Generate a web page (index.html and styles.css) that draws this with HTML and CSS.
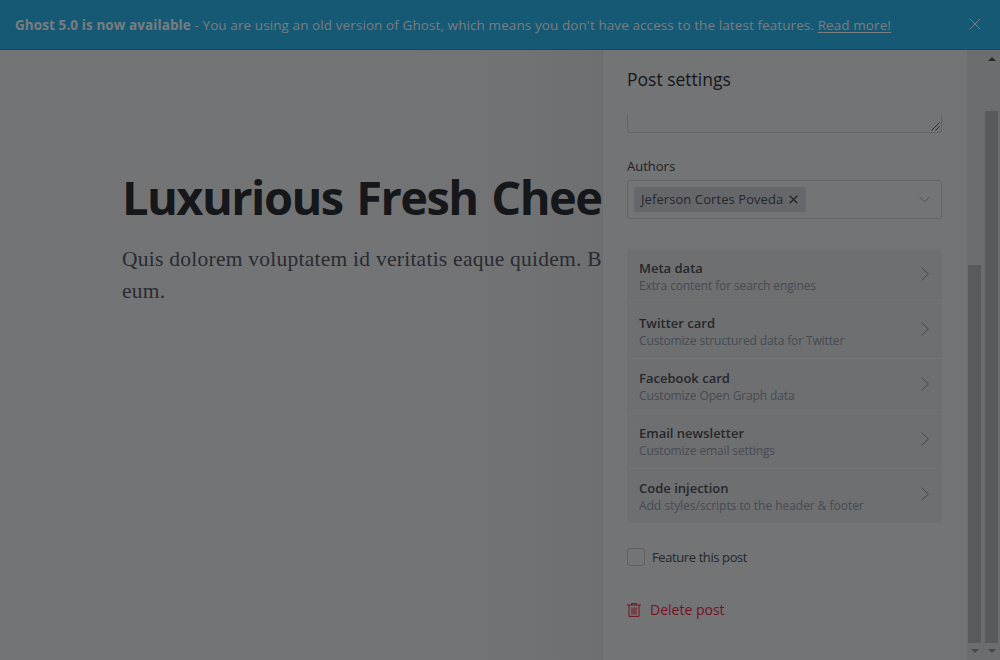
FILE: index.html
```html
<!DOCTYPE html>
<html lang="en">
<head>
<meta charset="utf-8">
<title>Post settings</title>
<link rel="stylesheet" href="styles.css">
</head>
<body>
<div class="app">
  <header class="banner">
    <p class="banner-text"><strong class="banner-strong">Ghost 5.0 is now available</strong> - You are using an old version of Ghost, which means you don't have access to the latest features. <a class="banner-link">Read more!</a></p>
    <svg class="banner-close" viewBox="0 0 12 12"><path d="M0.5 0.5l11 11M11.5 0.5l-11 11"/></svg>
  </header>
  <div class="main">
    <section class="editor">
      <h1 class="title">Luxurious Fresh Chee</h1>
      <p class="body-text">Quis dolorem voluptatem id veritatis eaque quidem. B<br>eum.</p>
    </section>
    <aside class="panel">
      <h2 class="panel-title">Post settings</h2>
      <div class="textarea"><svg class="grip" viewBox="0 0 9 9"><path d="M0.5 8.5l8-8M4.5 8.5l4-4"/></svg></div>
      <div class="label">Authors</div>
      <div class="select">
        <span class="token"><span class="token-name">Jeferson Cortes Poveda</span><svg class="token-x" viewBox="0 0 9 9"><path d="M0.7 0.7l7.6 7.6M8.3 0.7l-7.6 7.6"/></svg></span>
        <svg class="chevron-down" viewBox="0 0 11 7"><path d="M0.5 0.7l5 5 5-5"/></svg>
      </div>
      <ul class="nav">
        <li class="nav-item"><div><b class="nav-title">Meta data</b><span class="nav-sub">Extra content for search engines</span></div><svg class="chevron" viewBox="0 0 8 14"><path d="M0.6 0.6L7.4 7 0.6 13.4"/></svg></li>
        <li class="nav-item"><div><b class="nav-title">Twitter card</b><span class="nav-sub">Customize structured data for Twitter</span></div><svg class="chevron" viewBox="0 0 8 14"><path d="M0.6 0.6L7.4 7 0.6 13.4"/></svg></li>
        <li class="nav-item"><div><b class="nav-title">Facebook card</b><span class="nav-sub">Customize Open Graph data</span></div><svg class="chevron" viewBox="0 0 8 14"><path d="M0.6 0.6L7.4 7 0.6 13.4"/></svg></li>
        <li class="nav-item"><div><b class="nav-title">Email newsletter</b><span class="nav-sub">Customize email settings</span></div><svg class="chevron" viewBox="0 0 8 14"><path d="M0.6 0.6L7.4 7 0.6 13.4"/></svg></li>
        <li class="nav-item"><div><b class="nav-title">Code injection</b><span class="nav-sub nav-sub-wide">Add styles/scripts to the header &amp; footer</span></div><svg class="chevron" viewBox="0 0 8 14"><path d="M0.6 0.6L7.4 7 0.6 13.4"/></svg></li>
      </ul>
      <div class="feature"><span class="checkbox"></span><span class="feature-label">Feature this post</span></div>
      <div class="delete"><svg class="trash" viewBox="0 0 14 14"><path d="M0 2h14M4.5 2V0.6h5V2M2 2v11.4h10V2M5 4.5v7M7 4.5v7M9 4.5v7"/></svg><span class="delete-label">Delete post</span></div>
    </aside>
    <div class="bars">
      <div class="bar inner"><span class="thumb thumb-inner"></span><i class="arrow-down"></i></div>
      <div class="bar outer"><i class="arrow-up"></i><span class="thumb thumb-outer"></span><i class="arrow-down"></i></div>
    </div>
  </div>
</div>
</body>
</html>
```
FILE: styles.css
```css
* { box-sizing: border-box; }
body { margin: 0; background: #737476; font-family: "Open Sans", "Noto Sans", sans-serif; color: #292b2f; }
h1, h2, p, ul { margin: 0; padding: 0; }
svg { fill: none; stroke: currentColor; display: block; flex: none; }
.app { width: 1000px; height: 660px; display: flex; flex-direction: column; overflow: hidden; }
.banner { height: 50px; flex: none; display: flex; align-items: center; justify-content: space-between; padding: 0 19px 0 15px; background: #165974; border-bottom: 1px solid #0e4e6c; color: #7a7d80; }
.banner-text { font-size: 13.5px; letter-spacing: 0.09px; line-height: 20px; white-space: nowrap; padding-top: 1px; font-weight: 500; }
.banner-strong { font-weight: 700; }
.banner-link { text-decoration: underline; text-underline-offset: 2px; }
.banner-close { width: 12px; height: 12px; margin-bottom: 1px; }
.main { flex: 1; display: flex; min-height: 0; }
.editor { width: 602px; flex: none; overflow: hidden; padding: 114px 0 0 122px; background: linear-gradient(90deg, #737476 400px, #717274 520px, #6e6f71 602px); }
.title { font: 700 47px/66px "Open Sans", "Noto Sans", sans-serif; letter-spacing: -1.55px; word-spacing: 3px; color: #15171a; white-space: nowrap; }
.body-text { font: 21.5px/32px "Liberation Serif", serif; letter-spacing: 0.25px; color: #292b31; white-space: nowrap; margin-top: 13px; }
.panel { width: 365px; flex: none; border-left: 1px solid #6a6b6d; padding: 17px 25px 0 24px; display: flex; flex-direction: column; }
.panel-title { font-size: 17.5px; line-height: 24px; font-weight: 500; color: #15171a; white-space: nowrap; }
.textarea { height: 18px; margin-top: 24px; border: 1px solid #646568; border-top: 0; border-radius: 0 0 3px 3px; display: flex; justify-content: flex-end; align-items: flex-end; padding: 0 1px 1px; color: #303134; }
.grip { width: 9px; height: 9px; }
.label { font-size: 13px; line-height: 18px; margin-top: 24px; color: #1d1f22; font-weight: 500; }
.select { height: 39px; margin-top: 5px; border: 1px solid #646568; border-radius: 3px; display: flex; align-items: center; justify-content: space-between; padding: 0 11px 0 6px; color: #505255; }
.token { height: 25px; width: 172px; background: #66676b; border-radius: 3px; display: flex; align-items: center; justify-content: space-between; padding: 0 8px 0 7px; color: #25272a; }
.token-name { font-size: 13px; line-height: 18px; padding-bottom: 2px; letter-spacing: 0.08px; font-weight: 500; white-space: nowrap; }
.token-x { width: 9px; height: 9px; stroke-width: 1.4; }
.chevron-down { width: 11px; height: 7px; }
.nav { list-style: none; margin-top: 30px; border-radius: 4px; overflow: hidden; background: #6e6f71; }
.nav-item { height: 55px; display: flex; justify-content: space-between; padding: 10px 13px 0 12px; border-bottom: 1px solid #727375; color: #45474b; }
.nav-item:last-child { height: 54px; border-bottom: 0; }
.nav-title, .nav-sub { display: block; white-space: nowrap; line-height: 18px; }
.nav-title { font-size: 13px; font-weight: 600; color: #25272a; }
.nav-sub { font-size: 12px; letter-spacing: -0.13px; color: #464b52; }
.nav-sub-wide { letter-spacing: -0.04px; }
.chevron { width: 8px; height: 14px; margin-top: 8px; }
.feature { margin-top: 25px; display: flex; align-items: center; gap: 7px; font-size: 13px; letter-spacing: -0.4px; line-height: 18px; color: #25272a; }
.checkbox { width: 18px; height: 18px; border: 1px solid #606164; border-radius: 3px; }
.feature-label, .delete-label { white-space: nowrap; }
.delete { margin-top: 34px; display: flex; align-items: center; gap: 9px; font-size: 14px; line-height: 20px; font-weight: 500; color: #74131f; }
.trash { width: 14px; height: 14px; }
.bars { flex: 1; display: flex; background: #6c6d6f; }
.bar { display: flex; flex-direction: column; align-items: center; }
.inner { width: 15px; }
.outer { width: 19px; }
.thumb { width: 13px; background: #595a5c; }
.thumb-inner { margin-top: 215px; height: 378px; }
.thumb-outer { margin-top: 50px; height: 532px; }
.arrow-up, .arrow-down { border-left: 4px solid transparent; border-right: 4px solid transparent; }
.arrow-up { margin-top: 7px; border-bottom: 4px solid #292a2c; }
.arrow-down { margin-top: 6px; border-top: 4px solid #48494b; }
```
